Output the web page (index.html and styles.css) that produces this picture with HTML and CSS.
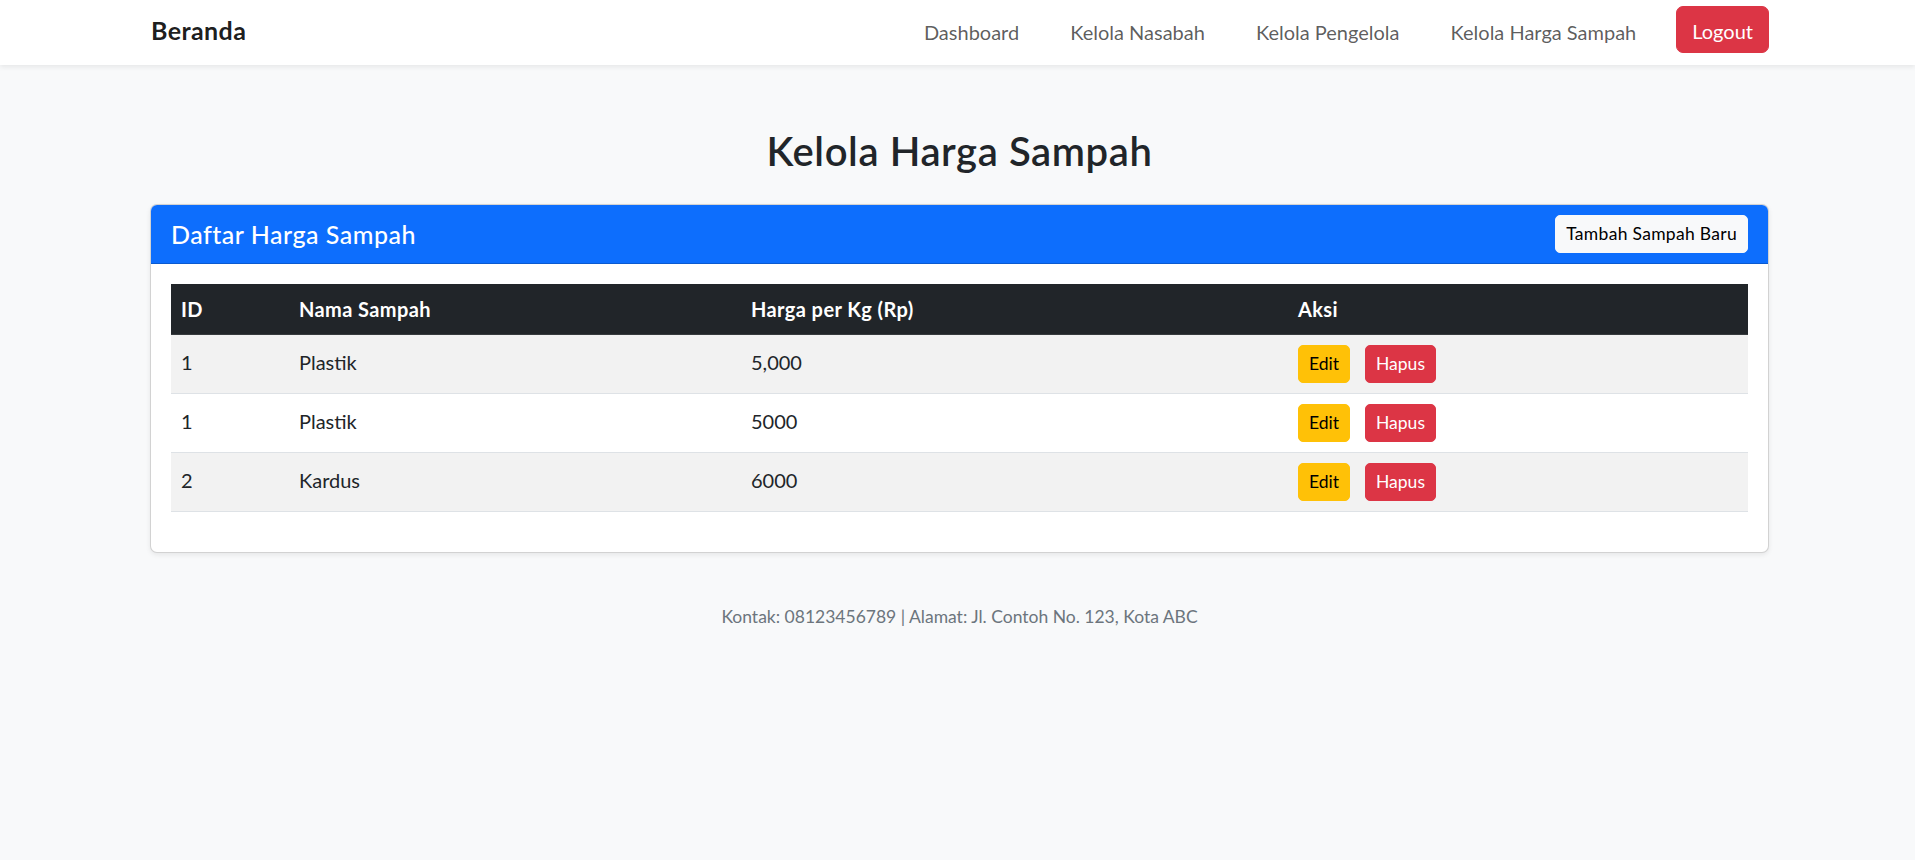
FILE: index.html
```html
<!DOCTYPE html>
<html lang="id">
<head>
<meta charset="utf-8">
<title>Kelola Harga Sampah</title>
<link rel="stylesheet" href="styles.css">
</head>
<body>
<nav class="navbar">
  <div class="nav-inner">
    <a class="brand" href="#">Beranda</a>
    <div class="nav-right">
      <ul class="nav-links">
        <li><a class="nav-link" href="#">Dashboard</a></li>
        <li><a class="nav-link" href="#">Kelola Nasabah</a></li>
        <li><a class="nav-link" href="#">Kelola Pengelola</a></li>
        <li><a class="nav-link" href="#">Kelola Harga Sampah</a></li>
      </ul>
      <a class="btn btn-danger btn-logout" href="#">Logout</a>
    </div>
  </div>
</nav>

<main class="page">
  <h2 class="page-title">Kelola Harga Sampah</h2>
  <div class="card">
    <div class="card-header">
      <h5 class="card-title">Daftar Harga Sampah</h5>
      <a class="btn btn-sm btn-light btn-add" href="#">Tambah Sampah Baru</a>
    </div>
    <div class="card-body">
      <table class="table">
        <colgroup>
          <col class="col-id">
          <col class="col-name">
          <col class="col-price">
          <col class="col-action">
        </colgroup>
        <thead>
          <tr><th>ID</th><th>Nama Sampah</th><th>Harga per Kg (Rp)</th><th>Aksi</th></tr>
        </thead>
        <tbody>
          <tr class="striped">
            <td>1</td><td>Plastik</td><td>5,000</td>
            <td class="actions"><a class="btn btn-sm btn-warning" href="#">Edit</a><a class="btn btn-sm btn-danger" href="#">Hapus</a></td>
          </tr>
          <tr>
            <td>1</td><td>Plastik</td><td>5000</td>
            <td class="actions"><a class="btn btn-sm btn-warning" href="#">Edit</a><a class="btn btn-sm btn-danger" href="#">Hapus</a></td>
          </tr>
          <tr class="striped">
            <td>2</td><td>Kardus</td><td>6000</td>
            <td class="actions"><a class="btn btn-sm btn-warning" href="#">Edit</a><a class="btn btn-sm btn-danger" href="#">Hapus</a></td>
          </tr>
        </tbody>
      </table>
    </div>
  </div>
</main>

<footer class="footer">Kontak: 08123456789 | Alamat: Jl. Contoh No. 123, Kota ABC</footer>
</body>
</html>
```

FILE: styles.css
```css
* { box-sizing: border-box; }

body {
  margin: 0;
  background: #f8f9fa;
  color: #212529;
  font-family: Lato, "Noto Sans", "Liberation Sans", sans-serif;
  font-size: 20px;
  line-height: 1.5;
}

a { text-decoration: none; }

/* Navbar */
.navbar {
  background: #fff;
  height: 65px;
  box-shadow: 0 2px 5px rgba(0, 0, 0, 0.075);
}

.nav-inner {
  width: 1619px;
  margin-left: 150px;
  height: 100%;
  padding: 6px 0 12px;
  display: flex;
  align-items: center;
  justify-content: space-between;
}

.brand {
  font-size: 25px;
  font-weight: 700;
  line-height: 1.5;
  letter-spacing: 0.4px;
  color: rgba(0, 0, 0, 0.9);
  padding-top: 3px;
  margin-left: 1px;
}

.nav-right {
  display: flex;
  align-items: center;
}

.nav-links {
  list-style: none;
  margin: 0;
  padding: 0;
  display: flex;
  gap: 51px;
}

.nav-link {
  display: block;
  padding-top: 5px;
  color: rgba(0, 0, 0, 0.65);
  line-height: 30px;
}

/* Buttons */
.btn {
  display: inline-block;
  border: 1px solid transparent;
  border-radius: 7px;
  padding: 7px 15px;
  font-size: 20px;
  line-height: 31px;
}

.btn-sm {
  padding: 5px 10px;
  font-size: 17.5px;
  line-height: 26px;
  border-radius: 5px;
}

.btn-logout {
  margin-left: 40px;
  padding: 9px 15px 5px;
}

.btn-add { letter-spacing: 0.3px; }

.btn-danger { background: #dc3545; border-color: #dc3545; color: #fff; }
.btn-warning { background: #ffc107; border-color: #ffc107; color: #000; }
.btn-light { background: #f8f9fa; border-color: #f8f9fa; color: #000; }

/* Page */
.page {
  width: 1619px;
  margin-left: 150px;
}

.page-title {
  margin: 62px 0 29px;
  font-size: 40px;
  font-weight: 600;
  line-height: 1.2;
  letter-spacing: 0.6px;
  text-align: center;
}

.card {
  background: #fff;
  border: 1px solid rgba(0, 0, 0, 0.175);
  border-radius: 7px;
  box-shadow: 0 2px 5px rgba(0, 0, 0, 0.075);
  overflow: hidden;
}

.card-header {
  background: #0d6efd;
  color: #fff;
  padding: 10px 20px;
  display: flex;
  align-items: center;
  justify-content: space-between;
  border-bottom: 1px solid rgba(0, 0, 0, 0.175);
}

.card-title {
  margin: 0;
  font-size: 25px;
  font-weight: 500;
  line-height: 1.2;
  letter-spacing: 0.5px;
}

.card-body { padding: 20px; }

.table {
  width: 100%;
  border-collapse: collapse;
  table-layout: fixed;
  margin-bottom: 20px;
}

.col-id { width: 118px; }
.col-name { width: 452px; }
.col-price { width: 547px; }

.table th,
.table td {
  padding: 10px;
  text-align: left;
  vertical-align: middle;
  line-height: 30px;
}

.table th {
  background: #212529;
  color: #fff;
  font-weight: 700;
  letter-spacing: 0.4px;
  border-bottom: 1px solid #373b3e;
}

.table td {
  padding-bottom: 15px;
  border-bottom: 1px solid #dee2e6;
  color: #212529;
}

.table td.actions { padding-bottom: 10px; }

.table tr.striped td { background: #f2f2f2; }

.table td .btn { vertical-align: middle; }

.table td .btn + .btn { margin-left: 15px; }

/* Footer */
.footer {
  width: 1619px;
  margin: 49px 0 0 150px;
  text-align: center;
  color: #6c757d;
  font-size: 17.5px;
  line-height: 30px;
}
```
